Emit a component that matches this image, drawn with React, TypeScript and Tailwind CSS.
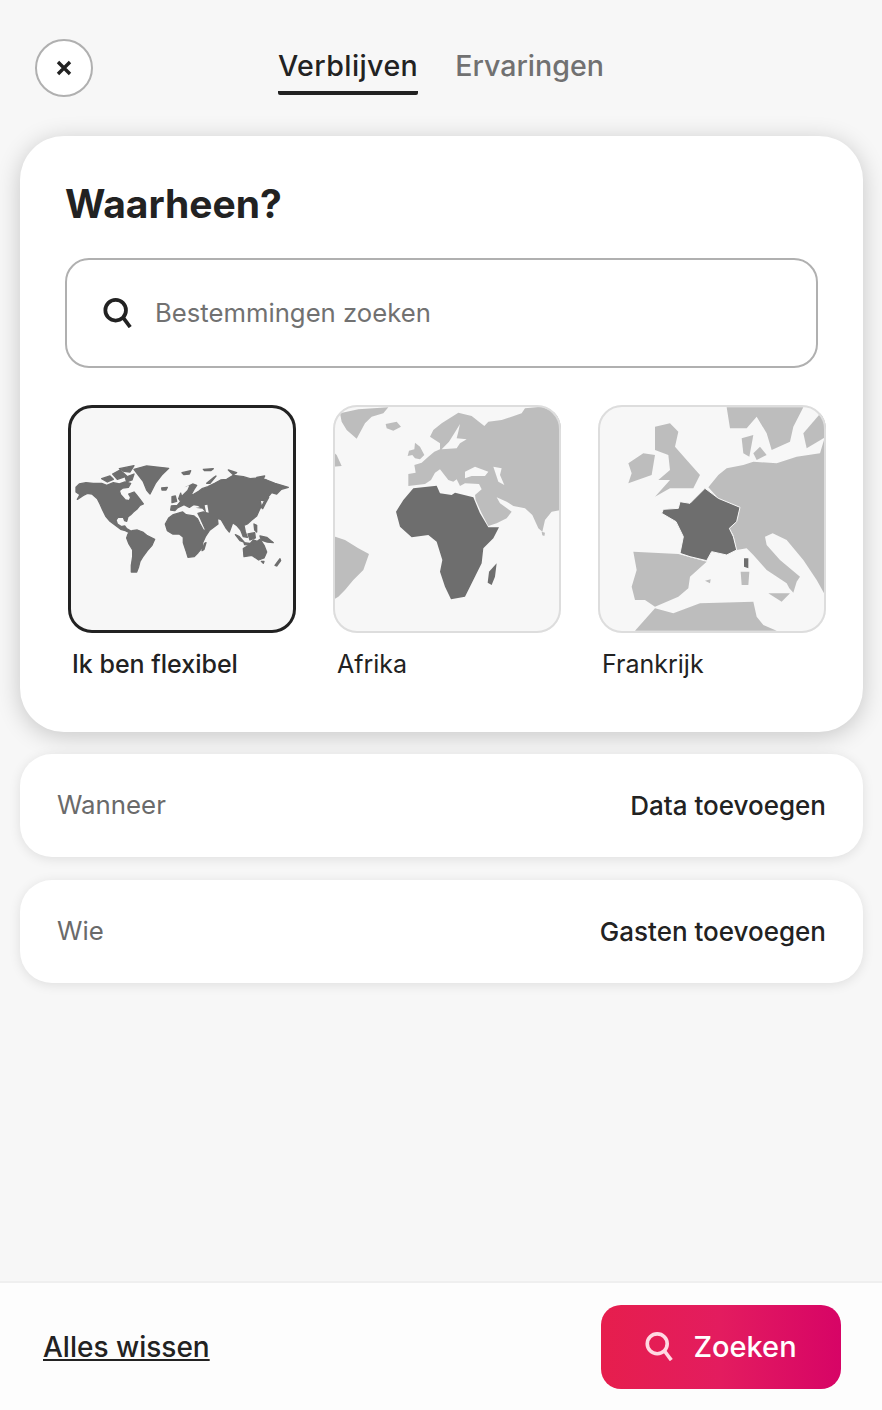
import React from "react";

const DARK = "#6e6e6e";
const LIGHT = "#bdbdbd";

// all three maps share one coordinate box
const MapBox: React.FC<{ children: React.ReactNode }> = ({ children }) => (
  <svg viewBox="24 15 684 684" className="block w-full h-full" strokeLinejoin="round">
    {children}
  </svg>
);

const SearchIcon: React.FC<{ color: string; size: number }> = ({ color, size }) => (
  <svg viewBox="0 0 32 32" width={size} height={size} fill="none" stroke={color} strokeWidth="4">
    <circle cx="13.5" cy="13" r="11" />
    <path d="M21.5 21L29 31" />
  </svg>
);

const WorldMap = () => (
  <MapBox>
    <g fill={DARK} stroke={DARK} strokeWidth="4">
      <path d="M48 262L58 252L78 248L100 250L125 250L140 256L160 248L178 252L195 246L212 250L205 262L188 264L178 272L182 284L196 300L208 302L212 292L206 282L222 276L232 288L240 298L250 312L240 316L232 326L220 336L212 344L204 350L200 364L194 362L190 352L174 352L168 360L172 372L184 380L194 378L200 386L214 394L208 398L196 392L182 388L166 376L150 364L138 350L128 330L120 312L112 296L96 282L82 280L70 286L52 298L60 284L48 276Z" />
      <path d="M125 236L150 228L160 238L142 246Z" />
      <path d="M158 222L180 210L200 228L172 238Z" />
      <path d="M178 206L222 197L210 216L192 214Z" />
      <path d="M196 232L222 222L216 240L200 246Z" />
      <path d="M222 208L260 198L326 205L305 225L286 250L270 282L260 270L250 245L235 225Z" />
      <path d="M305 264L322 262L318 270L306 270Z" />
      <path d="M204 402L216 392L232 390L248 396L260 406L284 418L276 436L262 452L250 468L240 484L236 500L230 516L214 516L214 496L218 470L218 450L206 430L200 414Z" />
      <path d="M316 372L326 354L340 344L368 336L378 344L402 348L412 356L420 372L430 390L448 392L436 410L428 428L428 442L414 458L402 470L384 472L378 452L370 428L370 412L358 402L338 402L322 392Z" />
      <path d="M332 330L334 318L352 316L362 304L356 296L362 280L378 262L398 252L410 256L402 268L392 286L402 282L416 274L426 266L444 260L464 250L482 240L500 238L520 226L550 230L570 236L596 234L620 240L645 250L685 262L664 268L650 282L635 278L625 290L610 302L600 300L604 318L598 330L590 348L575 360L562 372L552 376L556 396L562 412L550 410L542 390L530 376L518 368L508 396L498 384L484 360L472 354L474 372L450 390L436 388L420 352L414 340L430 336L440 338L428 324L410 322L400 314L388 322L372 314L352 324L344 332Z" />
      <path d="M434 430L438 428L432 448L426 452Z" />
      <path d="M550 446L566 436L580 420L592 424L600 418L612 436L620 456L612 474L596 480L576 466L552 470Z" />
      <path d="M604 484L612 484L610 490Z" />
      <path d="M600 408L620 412L640 428L622 426L604 420Z" />
      <path d="M526 404L538 410L552 426L540 422Z" />
      <path d="M552 428L580 432L578 436L554 434Z" />
      <path d="M564 402L584 398L586 414L570 420Z" />
      <path d="M582 372L590 376L590 396L584 390Z" />
      <path d="M604 322L612 306L622 286L626 292L616 310L608 326Z" />
      <path d="M645 496L660 476L662 482L650 498Z" />
      <path d="M336 290L346 288L350 304L336 308Z" />
      <path d="M366 218L392 212L388 222L372 224Z" />
      <path d="M430 208L460 206L452 212L434 212Z" />
      <path d="M440 250L462 232L468 228L450 250Z" />
      <path d="M505 210L530 218L520 224Z" />
      <path d="M590 232L614 228L610 236Z" />
    </g>
    <g fill="#f7f7f7">
      <path d="M434 316L442 314L446 338L438 336Z" />
      <path d="M400 316L414 318L420 322L404 324Z" />
      <path d="M360 268L388 256L382 270L366 286Z" />
    </g>
  </MapBox>
);

const AfricaMap = () => (
  <MapBox>
    <g fill={LIGHT}>
      <path d="M45 40L100 28L190 22L175 40L140 50L120 70L95 116L65 90L50 65Z" />
      <path d="M182 72L215 65L228 80L205 92L185 85Z" />
      <path d="M270 128L285 140L298 165L285 178L270 175L262 165L248 168L252 152L268 148Z" />
      <path d="M24 155L35 165L50 198L24 200Z" />
      <path d="M24 408L60 420L100 445L132 462L115 510L85 540L60 570L40 590L24 600Z" />
      <path d="M250 222L272 218L268 195L290 188L310 170L328 155L345 148L345 130L315 110L325 90L350 70L400 38L440 48L478 78L490 65L530 60L590 40L600 25L650 20L708 45V330L680 335L660 360L652 395L640 385L622 345L600 325L565 318L545 305L515 292L525 310L560 335L545 355L515 370L490 378L470 340L452 300L450 285L470 268L462 252L420 250L405 258L395 238L385 245L370 240L345 208L330 218L318 240L300 252L250 258Z" />
      <path d="M650 395L660 398L658 408L652 406Z" />
    </g>
    <g fill="#f7f7f7">
      <path d="M420 215L450 200L490 215L480 228L440 228L420 235Z" />
      <path d="M505 200L530 205L525 225L538 255L520 245Z" />
      <path d="M405 72L388 100L372 125L350 148L395 145L405 130L425 118L395 115L400 95Z" />
      <path d="M520 30L548 22L590 20L570 42L530 50Z" />
    </g>
    <g fill={DARK}>
      <path d="M265 265L335 257L345 280L380 285L390 278L445 292L465 340L490 382L522 382L505 415L475 445L470 490L445 540L420 590L378 598L360 560L345 515L352 480L335 425L310 405L260 412L225 380L213 335L235 300Z" />
      <path d="M515 490L510 530L500 555L488 548L492 515Z" />
    </g>
  </MapBox>
);

const FranceMap = () => (
  <MapBox>
    <g fill={LIGHT}>
      <path d="M410 22H640L610 80L600 125L545 150L530 100L500 50L470 85L420 85Z" />
      <path d="M640 100L700 30H708V110L650 145Z" />
      <path d="M455 115L490 105L478 170L460 160Z" />
      <path d="M510 140L530 165L500 180L490 160Z" />
      <path d="M115 190L160 160L195 165L185 225L115 250L125 220Z" />
      <path d="M195 80L240 70L265 95L255 140L290 180L330 225L310 265L240 265L195 290L240 240L205 240L240 210L235 165L195 150Z" />
      <path d="M355 262L385 225L410 205L460 195L490 185L560 190L620 170L690 160L708 100V590L680 540L640 480L590 420L548 400L525 410L530 435L570 480L630 530L620 545L610 578L598 565L590 550L530 510L490 465L470 445L440 450L430 405L418 385L440 365L450 322L385 295Z" />
      <path d="M130 455L265 462L350 485L300 530L295 565L265 590L195 620L165 600L135 600L125 560L140 510Z" />
      <path d="M135 692L195 625L250 640L330 610L490 605L500 650L520 675L560 692Z" />
      <path d="M535 580L600 580L575 605Z" />
      <path d="M452 515L478 515L475 555L455 555Z" />
      <path d="M345 542L362 538L360 550Z" />
    </g>
    <g fill={DARK}>
      <path
        stroke="#f7f7f7"
        strokeWidth="3"
        d="M345 265L385 295L450 322L440 365L418 385L430 410L440 450L410 465L365 455L350 482L300 470L270 460L280 410L258 365L215 340L220 328L265 325L270 305L300 310Z"
      />
      <path d="M462 475L475 475L475 505L462 500Z" />
    </g>
  </MapBox>
);

const destinations = [
  { name: "Ik ben flexibel", selected: true, map: <WorldMap /> },
  { name: "Afrika", selected: false, map: <AfricaMap /> },
  { name: "Frankrijk", selected: false, map: <FranceMap /> },
];

const SummaryRow: React.FC<{ label: string; action: string }> = ({ label, action }) => (
  <div className="h-[103px] rounded-[32px] bg-white shadow-[0_2px_12px_rgba(0,0,0,0.1)] pl-[37px] pr-[37px] flex items-center justify-between text-[25.8px]">
    <span className="text-[#6a6a6a]">{label}</span>
    <span className="font-medium text-[26px] text-[#222222]">{action}</span>
  </div>
);

export default function App() {
  return (
    <div className="h-[1410px] flex flex-col bg-[#f7f7f7] text-[#222222] font-['Inter',sans-serif] overflow-hidden">
      <header className="relative h-[136px] shrink-0 flex justify-center gap-[37px] pt-[42px]">
        <button className="absolute left-[35px] top-[39px] w-[58px] h-[58px] rounded-full border-2 border-[#b0b0b0] bg-white flex items-center justify-center">
          <svg viewBox="0 0 16 16" className="w-[16px] h-[16px]" fill="none" stroke="#222222" strokeWidth="3.4">
            <path d="M2 2L14 14M14 2L2 14" />
          </svg>
        </button>
        <div className="h-[53px] border-b-4 border-[#222222] rounded-b-[2px] text-[28.6px] tracking-[0.4px] leading-[48px] font-medium">Verblijven</div>
        <div className="text-[28.6px] leading-[48px] font-medium text-[#717171]">Ervaringen</div>
      </header>

      <main className="pl-[20px] pr-[19px] flex flex-col gap-[22px]">
        <section className="h-[596px] rounded-[44px] bg-white shadow-[0_4px_24px_rgba(0,0,0,0.2)] pt-[40px] pl-[45px] pr-[37px]">
          <h1 className="text-[39px] leading-[56px] font-bold">Waarheen?</h1>
          <div className="mt-[26px] mr-[8px] h-[110px] rounded-[24px] border-2 border-[#b0b0b0] flex items-center pl-[36px] gap-[22px]">
            <SearchIcon color="#222222" size={30} />
            <span className="text-[25.7px] text-[#717171]">Bestemmingen zoeken</span>
          </div>
          <div className="mt-[37px] ml-[3px] flex gap-[37px]">
            {destinations.map((d) => (
              <div key={d.name} className="w-[228px]">
                <div
                  className={
                    d.selected
                      ? "h-[228px] rounded-[24px] overflow-hidden bg-[#f7f7f7] outline-[3px] -outline-offset-[3px] outline-[#222222]"
                      : "h-[228px] rounded-[24px] overflow-hidden bg-[#f7f7f7] outline-2 -outline-offset-2 outline-[#dddddd]"
                  }
                >
                  {d.map}
                </div>
                <p className={d.selected ? "mt-[13px] pl-[4px] text-[25px] leading-[36px] font-medium" : "mt-[13px] pl-[4px] text-[25px] leading-[36px]"}>
                  {d.name}
                </p>
              </div>
            ))}
          </div>
        </section>

        <div className="flex flex-col gap-[23px]">
          <SummaryRow label="Wanneer" action="Data toevoegen" />
          <SummaryRow label="Wie" action="Gasten toevoegen" />
        </div>
      </main>

      <footer className="mt-auto h-[129px] shrink-0 border-t-2 border-[#efefef] bg-[#fdfdfd] pl-[43px] pr-[41px] flex items-center justify-between">
        <span className="text-[28px] font-medium underline decoration-2 underline-offset-2">Alles wissen</span>
        <button className="w-[240px] h-[84px] rounded-[20px] bg-[linear-gradient(to_right,#e61e4d,#e31c5f,#d70466)] flex items-center justify-center gap-[19px] text-white text-[29px] font-medium">
          <SearchIcon color="#ffd9e2" size={29} />
          Zoeken
        </button>
      </footer>
    </div>
  );
}
